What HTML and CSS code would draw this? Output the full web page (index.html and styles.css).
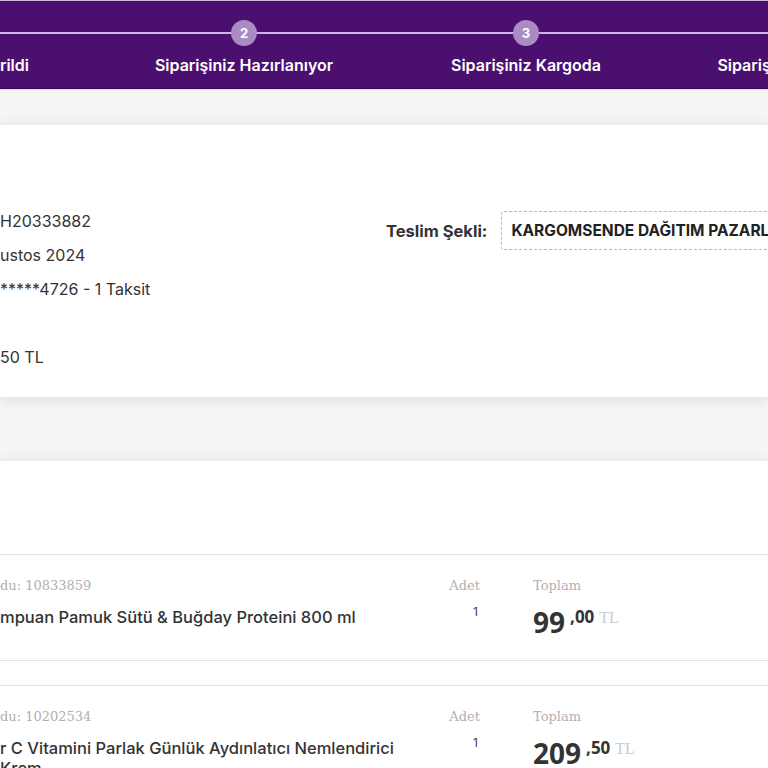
FILE: index.html
```html
<!DOCTYPE html>
<html lang="tr">
<head>
  <meta charset="UTF-8">
  <title>Sipariş Detayı</title>
  <link rel="stylesheet" href="styles.css">
</head>
<body>
  <header class="takip">
    <div class="adimlar">
      <div class="adim">
        <span class="no">1</span>
        <span class="etiket">Siparişiniz Verildi</span>
      </div>
      <div class="adim">
        <span class="no">2</span>
        <span class="etiket">Siparişiniz Hazırlanıyor</span>
      </div>
      <div class="adim">
        <span class="no">3</span>
        <span class="etiket">Siparişiniz Kargoda</span>
      </div>
      <div class="adim">
        <span class="no">4</span>
        <span class="etiket">Siparişiniz Teslim Edildi</span>
      </div>
    </div>
  </header>

  <section class="kart bilgi">
    <div class="bilgi-sol">
      <div>H20333882</div>
      <div>ustos 2024</div>
      <div>*****4726 - 1 Taksit</div>
      <div>&nbsp;</div>
      <div>50 TL</div>
    </div>
    <div class="bilgi-sag">
      <span class="teslim-etiket">Teslim Şekli:</span>
      <span class="teslim-kutu">KARGOMSENDE DAĞITIM PAZARLAMA</span>
    </div>
  </section>

  <section class="kart urunler">
    <div class="urun">
      <div class="urun-ad">
        <div class="kod">du: 10833859</div>
        <div class="ad">mpuan Pamuk Sütü &amp; Buğday Proteini 800 ml</div>
      </div>
      <div class="urun-adet">
        <div class="kod">Adet</div>
        <div class="adet">1</div>
      </div>
      <div class="urun-toplam">
        <div class="kod">Toplam</div>
        <div class="fiyat"><span class="tam">99</span><span class="kurus">,00</span><span class="tl">TL</span></div>
      </div>
    </div>
    <div class="urun">
      <div class="urun-ad">
        <div class="kod">du: 10202534</div>
        <div class="ad">r C Vitamini Parlak Günlük Aydınlatıcı Nemlendirici Krem</div>
      </div>
      <div class="urun-adet">
        <div class="kod">Adet</div>
        <div class="adet">1</div>
      </div>
      <div class="urun-toplam">
        <div class="kod">Toplam</div>
        <div class="fiyat"><span class="tam">209</span><span class="kurus">,50</span><span class="tl">TL</span></div>
      </div>
    </div>
  </section>
</body>
</html>
```

FILE: styles.css
```css
body {
  margin: 0;
  background: #f5f5f5;
  font-family: Inter, "Noto Sans", sans-serif;
  color: #333;
  overflow: hidden;
}
.takip {
  background: #4b0f6f;
  border-top: 1px solid #cdb8dc;
  border-bottom: 1px solid #3a0a57;
  box-shadow: 0 1px 0 #ecd0f3;
  padding: 19px 0 13px;
  overflow: hidden;
}
.adimlar {
  display: flex;
  width: 1128px;
  margin-left: -179px;
  background: linear-gradient(#d2b4e6, #d2b4e6) no-repeat 0 12px / 100% 2px;
}
.adim {
  width: 282px;
  display: flex;
  flex-direction: column;
  align-items: center;
}
.no {
  width: 26px;
  height: 26px;
  border-radius: 50%;
  background: #a98cc2;
  color: #fff;
  font-size: 13px;
  font-weight: 700;
  display: flex;
  align-items: center;
  justify-content: center;
}
.etiket {
  margin-top: 9px;
  color: #fff;
  font-size: 16px;
  font-weight: 600;
  line-height: 20px;
  white-space: nowrap;
}
.kart {
  background: #fff;
  box-shadow: 0 2px 14px rgba(0, 0, 0, 0.1);
}
.bilgi {
  margin-top: 36px;
  display: grid;
  grid-template-columns: 386px 1fr;
  padding: 79px 0 23px;
}
.bilgi-sol {
  font-size: 16px;
  line-height: 34px;
  color: #333;
}
.bilgi-sag {
  display: flex;
  align-items: center;
  margin-top: 7px;
  align-self: start;
  white-space: nowrap;
}
.teslim-etiket {
  font-size: 16.5px;
  font-weight: 700;
  color: #333;
}
.teslim-kutu {
  margin-left: 14px;
  height: 37px;
  display: flex;
  align-items: center;
  padding: 0 9px;
  border: 1px dashed #b8b8b8;
  border-radius: 3px;
  font-size: 15.5px;
  font-weight: 700;
  color: #222;
}
.urunler {
  margin-top: 64px;
  padding-top: 93px;
  height: 400px;
}
.urun {
  display: grid;
  grid-template-columns: 430px 50px 1fr;
  border-top: 1px solid #e3e3e3;
  border-bottom: 1px solid #e3e3e3;
  padding: 21px 0 23px;
  margin-bottom: 24px;
}
.kod {
  font-family: "DejaVu Serif", serif;
  font-size: 13px;
  line-height: 20px;
  color: #b0b0b0;
}
.ad {
  margin-top: 11px;
  font-size: 16.5px;
  font-weight: 500;
  line-height: 20px;
  color: #333;
}
.urun-adet {
  text-align: right;
}
.adet {
  margin-top: 8px;
  font-size: 12px;
  color: #444;
  padding-right: 2px;
}
.urun-toplam {
  padding-left: 53px;
}
.fiyat {
  margin-top: 11px;
  display: flex;
  align-items: flex-start;
  font-family: "Open Sans", sans-serif;
}
.tam {
  font-size: 28px;
  font-weight: 700;
  line-height: 30px;
  color: #333;
}
.kurus {
  margin: 1px 0 0 5px;
  font-size: 17px;
  font-weight: 700;
  line-height: 17px;
  color: #333;
}
.tl {
  margin: 3px 0 0 5px;
  font-family: "Liberation Serif", serif;
  font-size: 16px;
  line-height: 15px;
  color: #cacaca;
}
```
